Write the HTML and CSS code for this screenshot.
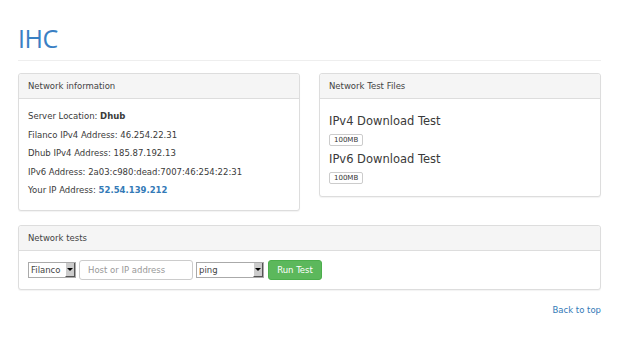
FILE: index.html
```html
<!DOCTYPE html>
<html>
<head>
<meta charset="utf-8">
<link rel="stylesheet" href="styles.css">
</head>
<body>
<div class="container">
  <h1 class="title">IHC</h1>
  <hr class="rule">
  <div class="row">
    <div class="panel">
      <div class="panel-heading">Network information</div>
      <div class="panel-body info">
        <div>Server Location: <b>Dhub</b></div>
        <div>Filanco IPv4 Address: 46.254.22.31</div>
        <div>Dhub IPv4 Address: 185.87.192.13</div>
        <div>IPv6 Address: 2a03:c980:dead:7007:46:254:22:31</div>
        <div>Your IP Address: <b class="ip">52.54.139.212</b></div>
      </div>
    </div>
    <div class="panel">
      <div class="panel-heading">Network Test Files</div>
      <div class="panel-body files">
        <h4 class="file-title">IPv4 Download Test</h4>
        <span class="badge">100MB</span>
        <h4 class="file-title">IPv6 Download Test</h4>
        <span class="badge">100MB</span>
      </div>
    </div>
  </div>
  <div class="panel">
    <div class="panel-heading">Network tests</div>
    <div class="panel-body tests">
      <div class="select sel-loc"><span class="sel-text">Filanco</span><span class="sel-btn"><span class="arrow"></span></span></div>
      <div class="input">Host or IP address</div>
      <div class="select sel-cmd"><span class="sel-text">ping</span><span class="sel-btn"><span class="arrow"></span></span></div>
      <button class="btn">Run Test</button>
    </div>
  </div>
  <div class="footer"><a class="top-link" href="#">Back to top</a></div>
</div>
</body>
</html>
```

FILE: styles.css
```css
* { box-sizing: border-box; }
html, body { margin: 0; padding: 0; background: #fff; }
body {
  font-family: "DejaVu Sans", Verdana, sans-serif;
  font-size: 8.5px;
  color: #3a3a3a;
}
.container { padding: 0 19px 0 18px; }
.title {
  margin: 0;
  padding-top: 23px;
  font-family: "Open Sans", "DejaVu Sans", sans-serif;
  font-size: 25px;
  font-weight: normal;
  color: #3a80c4;
  line-height: 31px;
  letter-spacing: -0.5px;
}
.rule {
  margin: 6px 0 12px;
  border: 0;
  border-top: 1px solid #eee;
}
.row {
  display: grid;
  grid-template-columns: 1fr 1fr;
  column-gap: 19px;
  align-items: start;
  margin-bottom: 14px;
}
.panel {
  border: 1px solid #ddd;
  border-radius: 3px;
  background: #fff;
  box-shadow: 0 1px 1px rgba(0,0,0,0.05);
}
.panel-heading {
  background: #f5f5f5;
  border-bottom: 1px solid #ddd;
  height: 25px;
  line-height: 25px;
  padding: 0 9px;
  color: #444;
  border-radius: 3px 3px 0 0;
}
.panel-body { padding: 0 9px; }
.info { padding-top: 8px; padding-bottom: 10px; line-height: 18.6px; }
.info b { font-weight: bold; }
.info .ip { color: #337ab7; }
.files {
  display: flex;
  flex-direction: column;
  align-items: flex-start;
  padding-top: 13px;
  padding-bottom: 8px;
}
.file-title {
  margin: 0;
  font-size: 11.5px;
  font-weight: normal;
  line-height: 18px;
}
.badge {
  display: block;
  height: 12px;
  border: 1px solid #ccc;
  border-radius: 2px;
  font-size: 7px;
  line-height: 10px;
  padding: 0 4px;
  color: #333;
  margin: 4px 0 4px;
}
.tests {
  display: flex;
  align-items: center;
  padding-top: 9px;
  padding-bottom: 9px;
  gap: 3px;
}
.select {
  display: flex;
  align-items: stretch;
  height: 16px;
  border: 1px solid #aaa;
  background: #fff;
  font-size: 8.5px;
}
.sel-loc { width: 48px; }
.sel-cmd { width: 68px; }
.sel-text { flex: 1; line-height: 14px; padding-left: 2px; color: #444; }
.sel-btn {
  width: 10px;
  background: #ccc;
  border-left: 1px solid #fff;
  border-right: 1px solid #555;
  border-bottom: 1px solid #555;
  display: flex;
  align-items: center;
  justify-content: center;
}
.arrow {
  width: 0; height: 0;
  border-left: 3px solid transparent;
  border-right: 3px solid transparent;
  border-top: 3px solid #000;
}
.input {
  width: 114px;
  height: 20px;
  border: 1px solid #ccc;
  border-radius: 3px;
  padding: 0 8px;
  line-height: 18px;
  color: #999;
}
.btn {
  height: 20px;
  width: 54px;
  background: #5cb85c;
  border: 1px solid #4cae4c;
  border-radius: 3px;
  color: #fff;
  font-family: inherit;
  font-size: 8.5px;
  padding: 0;
  margin-left: 1px;
}
.footer { text-align: right; padding-top: 15px; }
.top-link { color: #337ab7; text-decoration: none; }
```
